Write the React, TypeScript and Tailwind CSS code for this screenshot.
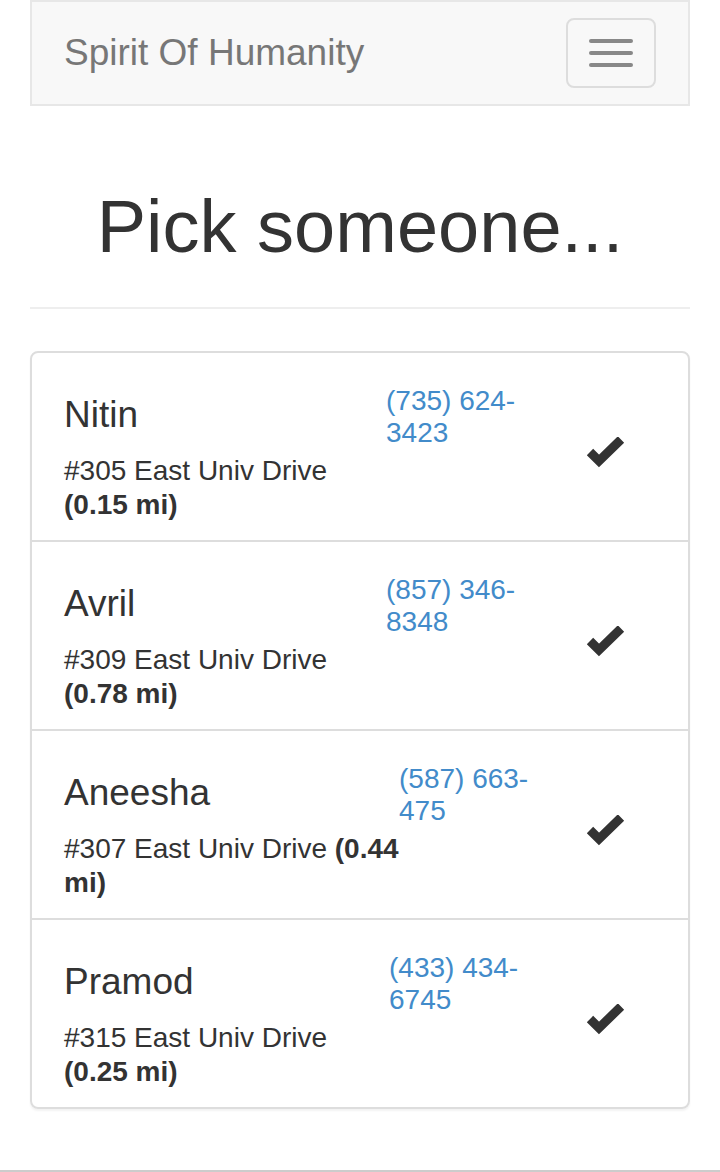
import React from "react";

interface Person {
    name: string;
    address: string;
    distance: string;
    phone1: string;
    phone2: string;
    infoWidth: string;
}

const people: Person[] = [
    { name: "Nitin", address: "#305 East Univ Drive", distance: "(0.15 mi)", phone1: "(735) 624-", phone2: "3423", infoWidth: "w-[322px]" },
    { name: "Avril", address: "#309 East Univ Drive", distance: "(0.78 mi)", phone1: "(857) 346-", phone2: "8348", infoWidth: "w-[322px]" },
    { name: "Aneesha", address: "#307 East Univ Drive", distance: "(0.44 mi)", phone1: "(587) 663-", phone2: "475", infoWidth: "w-[335px]" },
    { name: "Pramod", address: "#315 East Univ Drive", distance: "(0.25 mi)", phone1: "(433) 434-", phone2: "6745", infoWidth: "w-[325px]" },
];

function CheckIcon() {
    return (
        <svg width="40" height="32" viewBox="0 0 40 32" className="block">
            <polyline
                points="4,15 13,24 35,2.5"
                fill="none"
                stroke="#333"
                strokeWidth="9"
                strokeLinecap="butt"
                strokeLinejoin="miter"
            />
        </svg>
    );
}

function PersonRow({ person, last }: { person: Person; last: boolean }) {
    return (
        <div className={`flex pl-[32px] pr-[30px] pt-[20px] pb-[18px] ${last ? "" : "border-b-2 border-[#ddd]"}`}>
            <div className={`${person.infoWidth} shrink-0`}>
                <h4 className="mt-[22px] mb-[20px] text-[37px] leading-[39px] font-normal">{person.name}</h4>
                <p className="text-[28px] leading-[34px]">
                    {person.address} <b className="font-bold">{person.distance}</b>
                </p>
            </div>
            <div className="flex-1 mt-[12px] text-[28px] leading-[32px] text-[#428bca]">
                <div>{person.phone1}</div>
                <div>{person.phone2}</div>
            </div>
            <div className="w-[72px] shrink-0 flex items-center">
                <div className="mt-[10px]">
                    <CheckIcon />
                </div>
            </div>
        </div>
    );
}

export default function App() {
    return (
        <div className="w-[720px] bg-white text-[#333] font-['Liberation_Sans',Arial,sans-serif]">
            <div className="px-[30px]">
                <nav className="h-[106px] border-2 border-[#e7e7e7] bg-[#f8f8f8] flex items-center justify-between">
                    <span className="pl-[32px] text-[37px] leading-[40px] text-[#777]">Spirit Of Humanity</span>
                    <button className="mr-[32px] w-[90px] h-[70px] border-2 border-[#ddd] rounded-[8px] flex flex-col items-center justify-center gap-[8px]">
                        <span className="block w-[44px] h-[4px] rounded-[2px] bg-[#888]" />
                        <span className="block w-[44px] h-[4px] rounded-[2px] bg-[#888]" />
                        <span className="block w-[44px] h-[4px] rounded-[2px] bg-[#888]" />
                    </button>
                </nav>

                <h1 className="mt-[81px] pb-[41px] border-b-2 border-[#eee] text-center text-[74px] leading-[79px] font-normal">
                    Pick someone...
                </h1>

                <div className="mt-[42px] border-2 border-[#ddd] rounded-[8px] shadow-[0_2px_2px_rgba(0,0,0,0.05)]">
                    {people.map((p, i) => (
                        <PersonRow key={p.name} person={p} last={i === people.length - 1} />
                    ))}
                </div>
            </div>
            <div className="mt-[61px] border-t-2 border-[#ccc]" />
        </div>
    );
}
